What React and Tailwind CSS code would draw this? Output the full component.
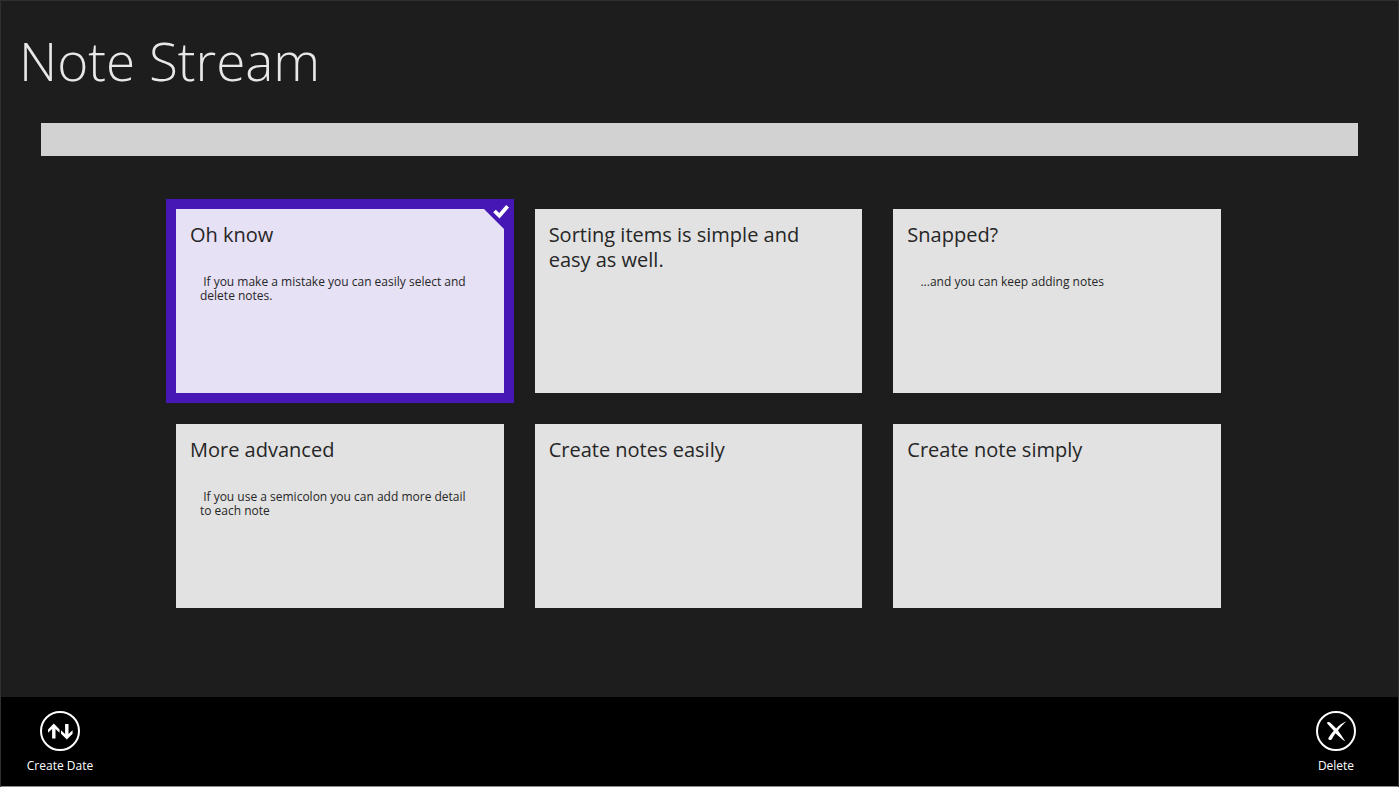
import { useState } from "react";

const initialNotes = [
  { id: 1, title: "Oh know", detail: " If you make a mistake you can easily select and delete notes." },
  { id: 2, title: "Sorting items is simple and easy as well." },
  { id: 3, title: "Snapped?", detail: " ...and you can keep adding notes" },
  { id: 4, title: "More advanced", detail: " If you use a semicolon you can add more detail to each note" },
  { id: 5, title: "Create notes easily" },
  { id: 6, title: "Create note simply" },
];

const NoteCard = ({ note, selected, onToggle }) => {
  return (
    <button
      type="button"
      aria-pressed={selected}
      onClick={() => onToggle(note.id)}
      className={`relative flex min-h-[184px] flex-col items-start px-[14px] pt-[13px] pb-4 text-left text-[#262626] ${
        selected ? "bg-[#e6e1f5] ring-[10px] ring-[#4617b4]" : "bg-[#e2e2e2]"
      }`}
    >
      <span className="pr-8 text-[20px] leading-[25px]">{note.title}</span>
      {note.detail && (
        <span className="mt-[28px] px-[10px] text-[12px] leading-[14px] whitespace-pre-wrap">
          {note.detail}
        </span>
      )}
      {/* folded corner with the check mark */}
      {selected && (
        <svg
          aria-hidden="true"
          viewBox="0 0 30 30"
          className="absolute -top-[10px] -right-[10px] h-[30px] w-[30px]"
        >
          <path d="M0 10V0H30V30H20Z" fill="#4617b4" />
          <path d="M10.5 12L15.4 16.8L23.6 7.2" fill="none" stroke="#fff" strokeWidth="3.8" />
        </svg>
      )}
    </button>
  );
};

const AppBarButton = ({ label, onClick, children }) => {
  return (
    <button
      type="button"
      onClick={onClick}
      className="flex w-20 flex-col items-center gap-[7px] text-[12px] leading-[16px] text-white"
    >
      <svg aria-hidden="true" viewBox="0 0 40 40" className="h-10 w-10">
        <circle cx="20" cy="20" r="19" fill="none" stroke="#fff" strokeWidth="2" />
        {children}
      </svg>
      <span>{label}</span>
    </button>
  );
};

const App = () => {
  const [notes, setNotes] = useState(initialNotes);
  const [selectedIds, setSelectedIds] = useState([1]);
  const [draft, setDraft] = useState("");

  const handleToggle = (id) => {
    setSelectedIds((ids) => (ids.includes(id) ? ids.filter((i) => i !== id) : [...ids, id]));
  };

  // a semicolon splits the title from the detail
  const handleAdd = (e) => {
    e.preventDefault();
    if (!draft.trim()) return;
    const [title, detail] = draft.split(";");
    setNotes([{ id: Date.now(), title, detail }, ...notes]);
    setDraft("");
  };

  const handleDelete = () => {
    setNotes(notes.filter((n) => !selectedIds.includes(n.id)));
    setSelectedIds([]);
  };

  return (
    <div className="flex min-h-screen flex-col border-x border-t border-[#303030] bg-[#1d1d1d] font-['Open_Sans','Noto_Sans',sans-serif]">
      <header className="px-[18px] pt-6">
        <h1 className="text-[53px] leading-[72px] font-light text-[#e8e8e8]">Note Stream</h1>
      </header>

      <form onSubmit={handleAdd} className="px-10 pt-[26px]">
        <input
          type="text"
          aria-label="New note"
          value={draft}
          onChange={(e) => setDraft(e.target.value)}
          className="block h-[33px] w-full bg-[#d2d2d2] px-2 text-[#262626] outline-none"
        />
      </form>

      <main className="flex-1 pt-[53px] pr-[42px] pb-10 pl-10">
        <div className="mx-auto grid max-w-[1045px] grid-cols-3 gap-x-[31px] gap-y-[31px]">
          {notes.map((note) => (
            <NoteCard
              key={note.id}
              note={note}
              selected={selectedIds.includes(note.id)}
              onToggle={handleToggle}
            />
          ))}
        </div>
      </main>

      <footer className="flex justify-between border-b border-[#8a8a8a] bg-black pt-[14px] pr-[22px] pb-3 pl-[19px]">
        <AppBarButton label="Create Date" onClick={() => setNotes([...notes].reverse())}>
          <path
            d="M13.8 12.6L19.6 18.4V21.8L15.5 18V27.5H12.1V18L8 21.8V18.4Z"
            fill="#fff"
          />
          <path
            d="M26.8 28.5L21 22.7V19.3L25.1 23V13H28.5V23L32.6 19.3V22.7Z"
            fill="#fff"
          />
        </AppBarButton>
        <AppBarButton label="Delete" onClick={handleDelete}>
          <path
            d="M10.8 12C11.4 10.7 13.2 10.6 14.4 11.8L20.2 17.6C23 14.4 26.2 11.8 30.4 10.2C27.2 13 24.4 16 22 19.4C24.2 22.6 26.6 26 29.4 30.6C25.8 28 22.4 25 19.6 22.2C18.2 24.2 16.8 26.4 15.6 28.6C14.6 29.6 12.2 29 12.2 27.6C13.6 24.8 15.8 22 17.8 19.8C15.6 17.4 13.2 14.8 10.8 12Z"
            fill="#fff"
          />
        </AppBarButton>
      </footer>
    </div>
  );
};

export default App;
